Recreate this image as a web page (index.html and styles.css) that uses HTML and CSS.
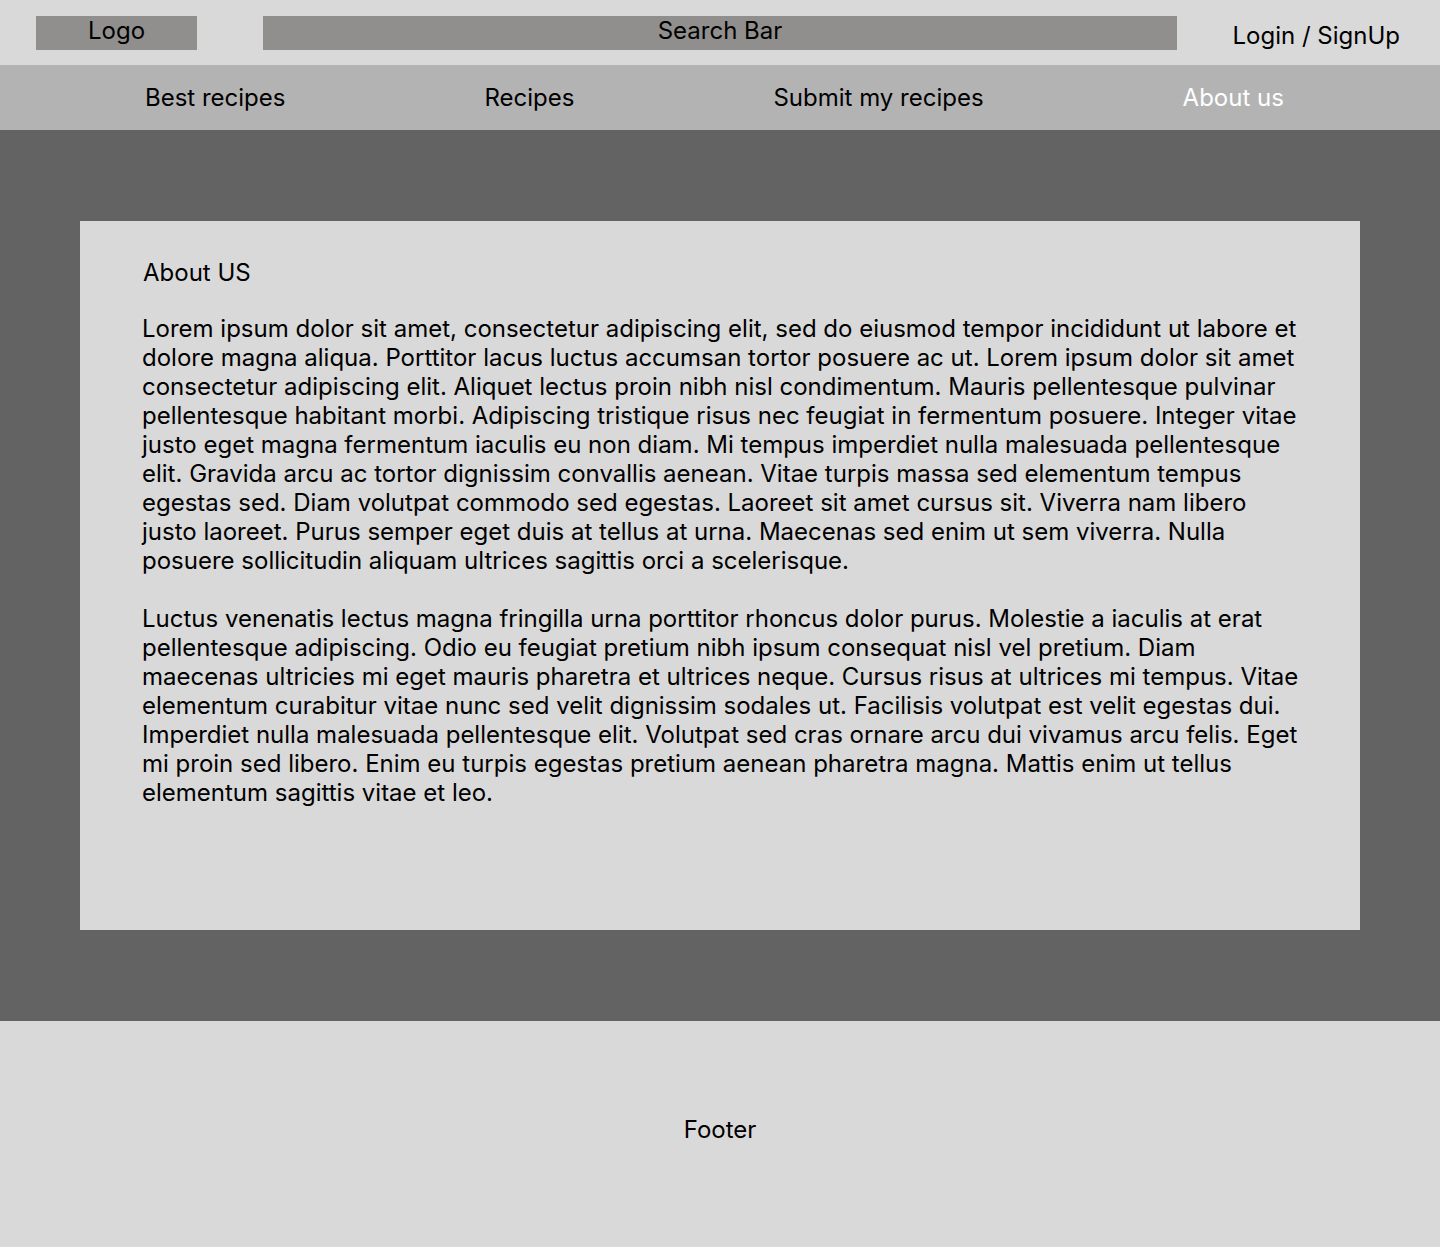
FILE: index.html
```html
<!DOCTYPE html>
<html lang="en">
<head>
<meta charset="UTF-8">
<meta name="viewport" content="width=device-width, initial-scale=1.0">
<title>About us</title>
<link rel="stylesheet" href="styles.css">
</head>
<body>

<header class="topbar">
  <div class="logo">Logo</div>
  <div class="search">Search Bar</div>
  <a class="login" href="#">Login / SignUp</a>
</header>

<nav class="menu">
  <a href="#">Best recipes</a>
  <a href="#">Recipes</a>
  <a href="#">Submit my recipes</a>
  <a href="#" class="active">About us</a>
</nav>

<main class="main">
  <div class="card">
    <h2>About US</h2>
    <p>Lorem ipsum dolor sit amet, consectetur adipiscing elit, sed do eiusmod tempor incididunt ut labore et dolore magna aliqua. Porttitor lacus luctus accumsan tortor posuere ac ut. Lorem ipsum dolor sit amet consectetur adipiscing elit. Aliquet lectus proin nibh nisl condimentum. Mauris pellentesque pulvinar pellentesque habitant morbi. Adipiscing tristique risus nec feugiat in fermentum posuere. Integer vitae justo eget magna fermentum iaculis eu non diam. Mi tempus imperdiet nulla malesuada pellentesque elit. Gravida arcu ac tortor dignissim convallis aenean. Vitae turpis massa sed elementum tempus egestas sed. Diam volutpat commodo sed egestas. Laoreet sit amet cursus sit. Viverra nam libero justo laoreet. Purus semper eget duis at tellus at urna. Maecenas sed enim ut sem viverra. Nulla posuere sollicitudin aliquam ultrices sagittis orci a scelerisque.</p>
    <p>Luctus venenatis lectus magna fringilla urna porttitor rhoncus dolor purus. Molestie a iaculis at erat pellentesque adipiscing. Odio eu feugiat pretium nibh ipsum consequat nisl vel pretium. Diam maecenas ultricies mi eget mauris pharetra et ultrices neque. Cursus risus at ultrices mi tempus. Vitae elementum curabitur vitae nunc sed velit dignissim sodales ut. Facilisis volutpat est velit egestas dui. Imperdiet nulla malesuada pellentesque elit. Volutpat sed cras ornare arcu dui vivamus arcu felis. Eget mi proin sed libero. Enim eu turpis egestas pretium aenean pharetra magna. Mattis enim ut tellus elementum sagittis vitae et leo.</p>
  </div>
</main>

<footer class="footer">Footer</footer>

</body>
</html>
```

FILE: styles.css
```css
body {
  font-family: Inter, "Noto Sans", sans-serif;
  font-size: 24px;
  line-height: 29px;
  color: #000;
  margin: 0;
  padding: 0;
}
a {
  color: inherit;
  text-decoration: none;
}
.topbar {
  display: flex;
  align-items: flex-start;
  height: 65px;
  box-sizing: border-box;
  padding: 16px 40px 0 36px;
  background-color: #d9d9d9;
}
.logo, .search {
  height: 34px;
  background-color: #908f8d;
  text-align: center;
}
.logo {
  width: 161px;
}
.search {
  width: 914px;
  margin-left: 66px;
}
.login {
  margin-left: auto;
  margin-top: 5px;
}
.menu {
  display: flex;
  align-items: center;
  gap: 199px;
  height: 65px;
  padding-left: 145px;
  background-color: #b3b3b3;
}
.menu .active {
  color: #fff;
}
.main {
  background-color: #636363;
  padding: 91px 80px;
}
.card {
  height: 709px;
  box-sizing: border-box;
  padding: 37px 58px 0 62px;
  background-color: #d9d9d9;
}
.card h2 {
  font-size: 24px;
  font-weight: normal;
  margin: 0 0 27px 1px;
}
.card p {
  margin: 0 0 29px;
}
.footer {
  height: 226px;
  box-sizing: border-box;
  padding-top: 94px;
  text-align: center;
  background-color: #d9d9d9;
}
```
